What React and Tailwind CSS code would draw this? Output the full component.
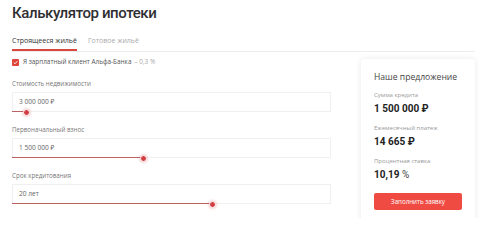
import React from "react";

function Field({ label, value, fill }) {
  return (
    <div className="mb-[13px]">
      <div className="text-[6.2px] leading-[9px] text-[#777]">{label}</div>
      <div className="relative mt-[4px] h-[20px] border border-[#f0f0f0] pl-[6px] flex items-center text-[6.6px] text-[#666]">
        {value}
        <div
          className="absolute left-[-1px] bottom-[-1px] h-[1.5px] bg-[#b86262]"
          style={{ width: fill }}
        />
        <div
          className="absolute bottom-[-4.5px] w-[7px] h-[7px] rounded-full bg-[#d23f43] border border-white shadow-[0_0_3px_rgba(210,63,67,0.45)]"
          style={{ left: fill - 4 }}
        />
      </div>
    </div>
  );
}

function Stat({ label, value, first }) {
  return (
    <div className={first ? "mt-[8px]" : "mt-[9px]"}>
      <div className="text-[6px] leading-[8px] text-[#999]">{label}</div>
      <div
        className="mt-[4px] text-[10px] leading-[12px] font-bold text-[#222]"
        style={{ fontFamily: "Roboto, sans-serif" }}
      >
        {value}
      </div>
    </div>
  );
}

export default function App() {
  return (
    <div
      className="w-[480px] h-[218px] overflow-hidden bg-white pl-[12px]"
      style={{ fontFamily: '"Open Sans", "Noto Sans", sans-serif' }}
    >
      <div
        className="h-[26px] text-[15px] leading-[26px] font-medium text-[#2f2f33] tracking-[-0.4px]"
        style={{ fontFamily: "Roboto, sans-serif" }}
      >
        Калькулятор ипотеки
      </div>
      <div className="mt-[4px] w-[463px] flex border-b border-[#ececec] text-[7px] leading-[10px]">
        <div className="h-[21px] pt-[6px] border-b-2 border-[#d9463e] -mb-px text-[#333]">
          Строящееся жильё
        </div>
        <div className="h-[21px] pt-[6px] ml-[11px] text-[#aaa]">Готовое жильё</div>
      </div>
      <div className="flex">
        <div className="w-[319px]">
          <div className="mt-[6px] h-[8px] flex items-center text-[6.4px] text-[#555]">
            <div className="w-[7px] h-[7px] rounded-[1px] bg-[#e0453c] flex items-center justify-center">
              <svg width="5" height="5" viewBox="0 0 10 10">
                <path d="M1.5 5.2 L4 7.6 L8.6 2.4" stroke="white" strokeWidth="1.8" fill="none" />
              </svg>
            </div>
            <span className="ml-[4px]">Я зарплатный клиент Альфа-Банка</span>
            <span className="ml-[3px] text-[#aaa]">– 0,3 %</span>
          </div>
          <div className="mt-[13px]">
            <Field label="Стоимость недвижимости" value="3 000 000 ₽" fill={14} />
            <Field label="Первоначальный взнос" value="1 500 000 ₽" fill={131} />
            <Field label="Срок кредитования" value="20 лет" fill={200} />
          </div>
        </div>
        <div className="ml-[30px] mt-[7px] w-[114px] h-[170px] rounded-[3px] bg-white shadow-[0_0_6px_rgba(0,0,0,0.09)] px-[13px] pt-[12px]">
          <div className="text-[8.6px] leading-[12px] text-[#444] whitespace-nowrap">Наше предложение</div>
          <Stat first label="Сумма кредита" value="1 500 000 ₽" />
          <Stat label="Ежемесячный платеж" value="14 665 ₽" />
          <Stat
            label="Процентная ставка"
            value={
              <span>
                10,19 <span className="font-normal text-[#444]">%</span>
              </span>
            }
          />
          <div className="mt-[12px] h-[17px] rounded-[2px] bg-[#ef4b43] flex items-center justify-center text-[6.2px] text-white">
            Заполнить заявку
          </div>
        </div>
      </div>
    </div>
  );
}
